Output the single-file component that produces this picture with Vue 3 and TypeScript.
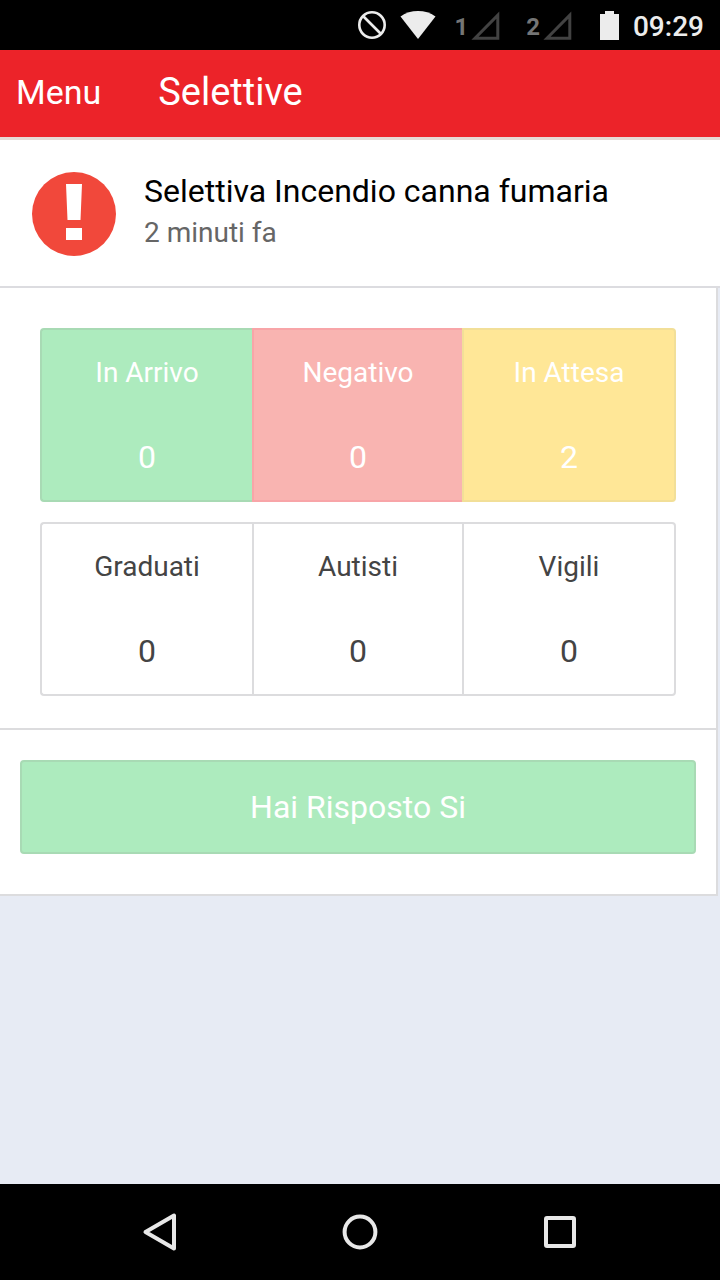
<script setup lang="ts">
interface Cell {
  label: string
  value: number
  tone: string
}

const answers: Cell[] = [
  { label: 'In Arrivo', value: 0, tone: 'green' },
  { label: 'Negativo', value: 0, tone: 'red' },
  { label: 'In Attesa', value: 2, tone: 'yellow' },
]

const roles: Cell[] = [
  { label: 'Graduati', value: 0, tone: 'plain' },
  { label: 'Autisti', value: 0, tone: 'plain' },
  { label: 'Vigili', value: 0, tone: 'plain' },
]

const groups: Cell[][] = [answers, roles]
</script>

<template>
  <div class="screen">
    <div class="status-bar">
      <svg class="blocked" width="28" height="28" viewBox="0 0 28 28" aria-hidden="true">
        <circle cx="14" cy="14" r="12.7" />
        <path d="M5 5 L23 23" />
      </svg>
      <svg class="wifi" width="36" height="28" viewBox="0 0 36 28" aria-hidden="true">
        <path d="M0.5 5.5 C10.5 -1.8 25.5 -1.8 35.5 5.5 L18 28 Z" />
      </svg>
      <div class="sims">
        <div v-for="slot in 2" :key="slot" class="sim">
          <span>{{ slot }}</span>
          <svg width="29" height="29" viewBox="0 0 29 29" aria-hidden="true">
            <path d="M4 27.3 H26.8 V4.2 Z" />
          </svg>
        </div>
      </div>
      <svg class="battery" width="19" height="29" viewBox="0 0 19 29" aria-hidden="true">
        <path d="M5 0 H14 V3 H19 V29 H0 V3 H5 Z" />
      </svg>
      <time class="clock">09:29</time>
    </div>

    <header class="app-bar">
      <button type="button" class="menu">Menu</button>
      <h1>Selettive</h1>
    </header>

    <section class="alert">
      <svg width="84" height="84" viewBox="0 0 84 84" aria-hidden="true">
        <circle cx="42" cy="42" r="42" fill="#f1483b" />
        <path d="M34 12 H50 L48.5 48 H35.5 Z M34 56 H50 V68 H34 Z" fill="#fff" />
      </svg>
      <div class="alert-text">
        <h2>Selettiva Incendio canna fumaria</h2>
        <p>2 minuti fa</p>
      </div>
    </section>

    <main class="card">
      <div class="groups">
        <div v-for="(group, i) in groups" :key="i" class="group">
          <button v-for="cell in group" :key="cell.label" type="button" class="cell" :class="cell.tone">
            <span class="label">{{ cell.label }}</span>
            <span class="value">{{ cell.value }}</span>
          </button>
        </div>
      </div>
      <div class="reply">
        <button type="button" class="reply-button">Hai Risposto Si</button>
      </div>
    </main>

    <nav class="nav-bar">
      <button type="button" aria-label="Indietro">
        <svg width="40" height="40" viewBox="0 0 40 40" aria-hidden="true">
          <path d="M5.5 20 L34 3.5 V36.5 Z" />
        </svg>
      </button>
      <button type="button" aria-label="Home">
        <svg width="40" height="40" viewBox="0 0 40 40" aria-hidden="true">
          <circle cx="20" cy="20" r="15.4" />
        </svg>
      </button>
      <button type="button" aria-label="Recenti">
        <svg width="40" height="40" viewBox="0 0 40 40" aria-hidden="true">
          <rect x="6" y="6" width="28" height="28" rx="1" />
        </svg>
      </button>
    </nav>
  </div>
</template>

<style>
body {
  margin: 0;
}
</style>

<style scoped>
.screen {
  display: flex;
  flex-direction: column;
  min-height: 100vh;
  background: #e7ebf4;
  font-family: Roboto, "Liberation Sans", sans-serif;
  color: #000;
}

.screen * {
  box-sizing: border-box;
}

button {
  margin: 0;
  padding: 0;
  border: 0;
  background: none;
  color: inherit;
  font: inherit;
}

h1,
h2,
p {
  margin: 0;
  font-weight: 400;
}

svg {
  display: block;
  flex: none;
}

.status-bar {
  display: flex;
  align-items: center;
  justify-content: flex-end;
  height: 50px;
  padding-right: 16px;
  background: #000;
  color: #ececec;
}

.blocked {
  fill: none;
  stroke: #ececec;
  stroke-width: 2.6;
  margin-right: 14px;
}

.wifi {
  fill: #ececec;
  margin-right: 18px;
}

.sims {
  display: flex;
  gap: 26px;
  margin-right: 28px;
}

.sim {
  display: flex;
  align-items: center;
  gap: 3px;
  color: #757575;
  font-size: 24px;
  font-weight: 700;
  line-height: 28px;
}

.sim span {
  padding-top: 4px;
}

.sim svg {
  fill: none;
  stroke: #424242;
  stroke-width: 3;
}

.battery {
  fill: #ececec;
  margin-right: 14px;
}

.clock {
  padding-top: 3px;
  font-size: 28px;
  font-weight: 500;
  line-height: 32px;
}

.app-bar {
  display: flex;
  align-items: center;
  gap: 57px;
  height: 90px;
  padding: 0 16px 3px;
  border-bottom: 3px solid #e6dad5;
  background: #ec2329;
  color: #fff;
}

.menu {
  font-size: 34px;
  line-height: 40px;
}

h1 {
  font-size: 38px;
  line-height: 44px;
}

.alert {
  display: flex;
  gap: 28px;
  padding: 32px 32px 30px;
  border-bottom: 2px solid #dcdce0;
  background: #fff;
}

h2 {
  font-size: 32px;
  line-height: 38px;
}

.alert p {
  color: #666;
  font-size: 28px;
  line-height: 46px;
}

.card {
  margin-right: 2px;
  border: 2px solid #dcdcde;
  border-width: 0 2px 2px 0;
  background: #fff;
}

.groups {
  display: flex;
  flex-direction: column;
  gap: 20px;
  padding: 40px 40px 32px;
  border-bottom: 2px solid #dcdcde;
}

.group {
  display: grid;
  grid-template-columns: repeat(3, 1fr);
}

.cell {
  display: flex;
  flex-direction: column;
  align-items: center;
  gap: 46px;
  height: 174px;
  padding-top: 25px;
  border: 2px solid #dcdcde;
  color: #444;
}

.cell:first-child {
  border-right: 0;
  border-radius: 4px 0 0 4px;
}

.cell:last-child {
  margin-left: -2px;
  border-radius: 0 4px 4px 0;
}

.label {
  font-size: 28px;
  line-height: 36px;
}

.value {
  font-size: 32px;
  line-height: 40px;
}

.green,
.reply-button {
  border-color: #a8dab4;
  background: #adebbe;
  color: #fff;
}

.red {
  border-color: #f8a5a8;
  background: #f9b4b1;
  color: #fff;
}

.yellow {
  border-color: #f2df98;
  background: #ffe797;
  color: #fff;
}

.reply {
  padding: 30px 20px 40px;
}

.reply-button {
  display: block;
  width: 100%;
  height: 94px;
  border: 2px solid #a8dab4;
  border-radius: 4px;
  font-size: 32px;
}

.nav-bar {
  display: flex;
  align-items: center;
  justify-content: center;
  gap: 160px;
  height: 96px;
  margin-top: auto;
  background: #000;
}

.nav-bar svg {
  fill: none;
  stroke: #e8e8e8;
  stroke-width: 4;
  stroke-linejoin: round;
}
</style>
